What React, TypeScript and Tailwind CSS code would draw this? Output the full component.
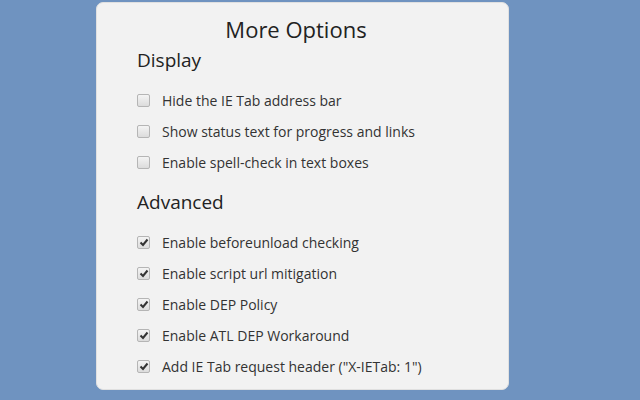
import React from 'react';

const display = [
  'Hide the IE Tab address bar',
  'Show status text for progress and links',
  'Enable spell-check in text boxes',
];

const advanced = [
  'Enable beforeunload checking',
  'Enable script url mitigation',
  'Enable DEP Policy',
  'Enable ATL DEP Workaround',
  'Add IE Tab request header ("X-IETab: 1")',
];

const Box: React.FC<{ checked: boolean }> = ({ checked }) => (
  <span className="w-[13px] h-[13px] rounded-[2px] border border-[#b5b5b5] bg-gradient-to-b from-[#f4f4f4] to-[#dcdcdc] flex items-center justify-center shrink-0">
    {checked && (
      <svg width="10" height="9" viewBox="0 0 10 9">
        <path d="M1.5 4.5 L4 7 L8.5 1.5" fill="none" stroke="#333" strokeWidth="2" />
      </svg>
    )}
  </span>
);

const Row: React.FC<{ label: string; checked: boolean }> = ({ label, checked }) => (
  <div className="flex items-center h-[31px]">
    <Box checked={checked} />
    <span className="ml-[12px] text-[14px] text-[#333]">{label}</span>
  </div>
);

export default function App() {
  return (
    <div className="w-[640px] h-[400px] bg-[#6f93c0] pt-[2px] pl-[96px]" style={{ fontFamily: '"Open Sans", sans-serif' }}>
      <div className="w-[413px] h-[388px] bg-[#f2f2f2] rounded-[7px] border border-[#e0e0e0] pl-[40px]">
        <h1 className="text-[22px] text-[#222] text-center pr-[53px] pt-[10px] leading-[32px]">More Options</h1>
        <h2 className="text-[19px] text-[#222] leading-[26px] mt-[2px]">Display</h2>
        <div className="mt-[12px] flex flex-col">
          {display.map((d) => <Row key={d} label={d} checked={false} />)}
        </div>
        <h2 className="text-[19px] text-[#222] leading-[26px] mt-[11px]">Advanced</h2>
        <div className="mt-[12px] flex flex-col">
          {advanced.map((d) => <Row key={d} label={d} checked />)}
        </div>
      </div>
    </div>
  );
}
